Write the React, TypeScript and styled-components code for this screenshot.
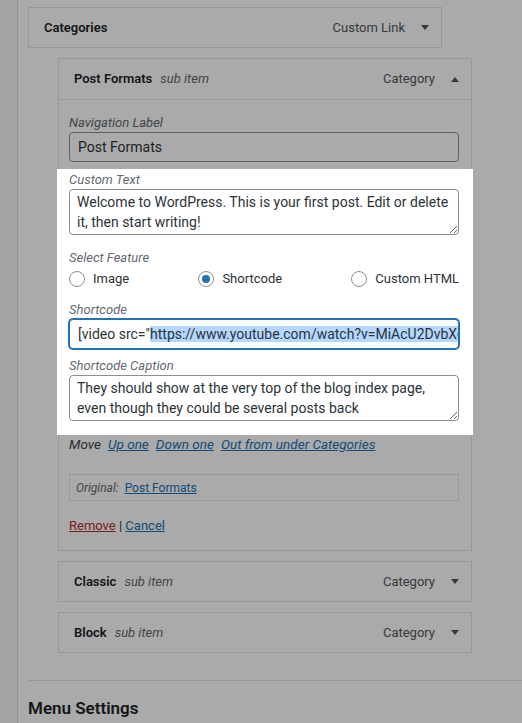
import * as React from 'react'
import styled, { createGlobalStyle } from 'styled-components'

const GlobalStyle = createGlobalStyle`
	* {
		box-sizing: border-box;
	}
	html,
	body {
		margin: 0;
		padding: 0;
		overflow: hidden;
		background: #fff;
	}
	body {
		font-family: Roboto, 'Liberation Sans', Arial, sans-serif;
		font-size: 13px;
		line-height: 18px;
		color: #1d2327;
	}
`

const Page = styled.div`
	display: flex;
	min-height: 100vh;
`

const Rail = styled.div`
	flex: none;
	width: 18px;
	background: #f6f7f7;
	border-right: 1px solid #e2e2e2;
`

const Main = styled.div`
	flex: 1;
	padding: 7px 0 0 10px;
`

const MenuList = styled.ul`
	list-style: none;
	margin: 0;
	padding: 0;
	display: flex;
	flex-direction: column;
	gap: 10px;
`

const Item = styled.li<{ $depth: number }>`
	width: 414px;
	margin-left: ${p => p.$depth * 30}px;
	border: 1px solid #e2e4e7;
	background: #fff;
`

const Handle = styled.div<{ $open?: boolean }>`
	display: flex;
	align-items: center;
	height: ${p => (p.$open ? 41 : 39)}px;
	padding: 0 12px 0 15px;
	border-bottom: ${p => (p.$open ? '1px solid #e2e4e7' : 'none')};
`

const Title = styled.span`
	font-weight: 600;
	color: #1d2327;
`

const Sub = styled.span`
	margin-left: 8px;
	font-style: italic;
	color: #646970;
`

const Type = styled.span`
	margin-left: auto;
	color: #50575e;
`

const Arrow = styled.svg`
	margin-left: 16px;
	flex: none;
`

const Settings = styled.div`
	padding: 14px 12px 15px 10px;
`

const Field = styled.div<{ $mt?: number }>`
	margin-top: ${p => p.$mt ?? 0}px;
`

const Label = styled.label`
	display: block;
	font-style: italic;
	color: #646970;
	line-height: 18px;
`

const TextInput = styled.input`
	display: block;
	width: 100%;
	height: 30px;
	margin: 0;
	padding: 0 8px;
	border: 1px solid #8c8f94;
	border-radius: 4px;
	background: #fff;
	font: 14px Roboto, 'Liberation Sans', Arial, sans-serif;
	color: #2c3338;
	outline: none;
`

const FocusBox = styled.div`
	width: 100%;
	height: 30px;
	padding: 0 8px;
	border: 1px solid #2271b1;
	box-shadow: 0 0 0 1px #2271b1;
	border-radius: 4px;
	background: #fff;
	font-size: 14px;
	line-height: 28px;
	color: #2c3338;
	white-space: nowrap;
	overflow: hidden;
`

const Selected = styled.span`
	background: #b3d7ff;
`

const TextArea = styled.textarea`
	display: block;
	width: 100%;
	height: 46px;
	margin: 0;
	padding: 2px 7px;
	border: 1px solid #8c8f94;
	border-radius: 4px;
	background: #fff;
	font: 14px/20px Roboto, 'Liberation Sans', Arial, sans-serif;
	color: #2c3338;
	resize: vertical;
	overflow: hidden;
	outline: none;
`

// the highlighted step of the tour; its shadow dims the rest of the page
const Spotlight = styled.div`
	position: relative;
	z-index: 5;
	margin: 7px -14px 0 -12px;
	padding: 2px 14px 14px 12px;
	background: #fff;
	box-shadow: 0 0 0 3000px rgba(0, 0, 0, 0.333);
`

const RadioRow = styled.div`
	display: flex;
	justify-content: space-between;
	align-items: center;
	height: 20px;
	margin-top: 2px;
`

const RadioOption = styled.label`
	display: flex;
	align-items: center;
	gap: 8px;
	color: #2c3338;
`

const RadioDot = styled.span<{ $checked?: boolean }>`
	width: 16px;
	height: 16px;
	border: 1px solid #8c8f94;
	border-radius: 50%;
	display: flex;
	align-items: center;
	justify-content: center;
	background: #fff;

	&::after {
		content: '';
		width: 8px;
		height: 8px;
		border-radius: 50%;
		background: ${p => (p.$checked ? '#2271b1' : 'transparent')};
	}
`

const MoveRow = styled.div`
	display: flex;
	gap: 7px;
	font-style: italic;
	font-size: 13.5px;
	color: #3c434a;
`

const Link = styled.a<{ $danger?: boolean }>`
	color: ${p => (p.$danger ? '#b32d2e' : '#2271b1')};
	text-decoration: underline;
	cursor: pointer;
`

const Original = styled.div`
	display: flex;
	align-items: center;
	gap: 6px;
	height: 27px;
	margin-top: 21px;
	padding: 0 6px;
	border: 1px solid #e2e4e7;
	font-size: 12px;
`

const OriginalLabel = styled.span`
	font-style: italic;
	color: #646970;
`

const Actions = styled.div`
	margin-top: 16px;
	color: #2c3338;
`

const SettingsSection = styled.section`
	margin-top: 27px;
	border-top: 1px solid #e2e4e7;
	padding-top: 16px;
`

const Heading = styled.h3`
	margin: 0;
	font-size: 17px;
	line-height: 22px;
	font-weight: 600;
	color: #1d2327;
`

const Caret = ({ up }: { up?: boolean }) => (
	<Arrow width="8" height="5" viewBox="0 0 8 5">
		<polygon points={up ? '0,5 8,5 4,0' : '0,0 8,0 4,5'} fill="#50575e" />
	</Arrow>
)

const ItemHandle = (p: { title: string; sub?: boolean; type: string; open?: boolean }) => (
	<Handle $open={p.open}>
		<Title>{p.title}</Title>
		{p.sub && <Sub>sub item</Sub>}
		<Type>{p.type}</Type>
		<Caret up={p.open} />
	</Handle>
)

const Radio = (p: { label: string; checked?: boolean }) => (
	<RadioOption>
		<RadioDot $checked={p.checked} />
		{p.label}
	</RadioOption>
)

export default function App() {
	return (
		<>
			<GlobalStyle />
			<Page>
				<Rail />
				<Main>
					<MenuList>
						<Item $depth={0}>
							<ItemHandle title="Categories" type="Custom Link" />
						</Item>
						<Item $depth={1}>
							<ItemHandle title="Post Formats" sub type="Category" open />
							<Settings>
								<Field>
									<Label>Navigation Label</Label>
									<TextInput defaultValue="Post Formats" />
								</Field>
								<Spotlight>
									<Field>
										<Label>Custom Text</Label>
										<TextArea
											rows={2}
											defaultValue="Welcome to WordPress. This is your first post. Edit or delete it, then start writing!"
										/>
									</Field>
									<Field $mt={14}>
										<Label>Select Feature</Label>
										<RadioRow>
											<Radio label="Image" />
											<Radio label="Shortcode" checked />
											<Radio label="Custom HTML" />
										</RadioRow>
									</Field>
									<Field $mt={12}>
										<Label>Shortcode</Label>
										<FocusBox>
											[video src="
											<Selected>https://www.youtube.com/watch?v=MiAcU2DvbXc"]</Selected>
										</FocusBox>
									</Field>
									<Field $mt={8}>
										<Label>Shortcode Caption</Label>
										<TextArea
											rows={2}
											defaultValue="They should show at the very top of the blog index page, even though they could be several posts back"
										/>
									</Field>
								</Spotlight>
								<MoveRow>
									<span>Move</span>
									<Link>Up one</Link>
									<Link>Down one</Link>
									<Link>Out from under Categories</Link>
								</MoveRow>
								<Original>
									<OriginalLabel>Original:</OriginalLabel>
									<Link>Post Formats</Link>
								</Original>
								<Actions>
									<Link $danger>Remove</Link> | <Link>Cancel</Link>
								</Actions>
							</Settings>
						</Item>
						<Item $depth={1}>
							<ItemHandle title="Classic" sub type="Category" />
						</Item>
						<Item $depth={1}>
							<ItemHandle title="Block" sub type="Category" />
						</Item>
					</MenuList>
					<SettingsSection>
						<Heading>Menu Settings</Heading>
					</SettingsSection>
				</Main>
			</Page>
		</>
	)
}
